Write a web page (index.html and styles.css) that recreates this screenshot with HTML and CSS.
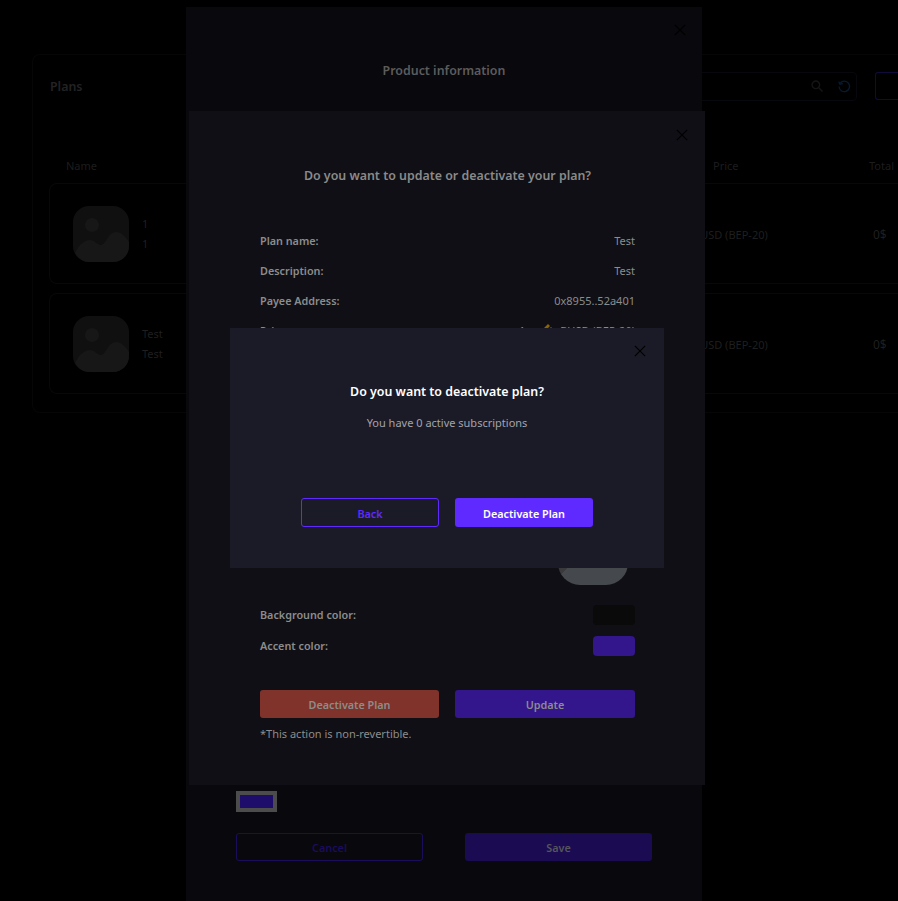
FILE: index.html
```html
<!DOCTYPE html>
<html lang="en">
<head>
    <meta charset="UTF-8">
    <meta name="viewport" content="width=device-width, initial-scale=1.0">
    <title>Plans</title>
    <link rel="stylesheet" href="styles.css">
</head>
<body>
    <div class="plans">
        <div class="plans__head">
            <div class="plans__title">Plans</div>
            <div class="search">
                <svg class="search__icon" viewBox="0 0 24 24" fill="none" stroke="#151515" stroke-width="2.400"><circle cx="10" cy="10" r="6.500"/><path d="M15 15l6.500 6.500"/></svg>
                <svg class="search__icon" viewBox="0 0 24 24" fill="none" stroke="#081a30" stroke-width="2.200"><path d="M5.500 7A9 9 0 1 1 3.500 13"/><path d="M3 4.500l2 4.500 5-1"/></svg>
            </div>
            <div class="plans__add"></div>
        </div>
        <div class="table__head">
            <span class="col-name">Name</span>
            <span class="col-price">Price</span>
            <span class="col-total">Total</span>
        </div>
        <div class="row">
            <svg class="thumb" viewBox="0 0 56 56"><rect width="56" height="56" rx="16" fill="#101010"/><circle cx="19" cy="19" r="7" fill="#171717"/><path d="M2 47C6 39 11 34 17 34C22 34 24 39 28 39C33 39 35 26 43 26C48 26 53 31 56 36V40C56 49 49 56 40 56H16C10 56 5 52 2 47z" fill="#171717"/></svg>
            <div class="row__text"><span>1</span><span>1</span></div>
            <span class="row__price">BUSD (BEP-20)</span>
            <span class="row__total">0$</span>
        </div>
        <div class="row">
            <svg class="thumb" viewBox="0 0 56 56"><rect width="56" height="56" rx="16" fill="#101010"/><circle cx="19" cy="19" r="7" fill="#171717"/><path d="M2 47C6 39 11 34 17 34C22 34 24 39 28 39C33 39 35 26 43 26C48 26 53 31 56 36V40C56 49 49 56 40 56H16C10 56 5 52 2 47z" fill="#171717"/></svg>
            <div class="row__text"><span>Test</span><span>Test</span></div>
            <span class="row__price">BUSD (BEP-20)</span>
            <span class="row__total">0$</span>
        </div>
    </div>

    <!-- first modal, furthest back -->
    <div class="modal modal--product">
        <svg class="close close--product" viewBox="0 0 14 14"><path d="M1 1l12 12M13 1L1 13"/></svg>
        <h2 class="product__title">Product information</h2>
        <div class="product__bottom">
            <div class="swatch-input"><div class="swatch-input__fill"></div></div>
            <div class="product__buttons">
                <button class="btn btn--cancel">Cancel</button>
                <button class="btn btn--save">Save</button>
            </div>
        </div>
    </div>

    <div class="modal modal--update">
        <svg class="close close--update" viewBox="0 0 14 14"><path d="M1 1l12 12M13 1L1 13"/></svg>
        <h2 class="update__title">Do you want to update or deactivate your plan?</h2>
        <div class="info">
            <div class="info__row"><b>Plan name:</b><span>Test</span></div>
            <div class="info__row"><b>Description:</b><span>Test</span></div>
            <div class="info__row"><b>Payee Address:</b><span>0x8955..52a401</span></div>
            <div class="info__row">
                <b>Price:</b>
                <span class="price"><span class="price__amount">1</span>
                    <svg class="coin" viewBox="0 0 14 14"><path d="M7 1l2 2-5 5-2-2zM10 4l2 2-5 5-2-2zM12.500 7.500l1 1-4 4-1-1z" fill="#8a6508"/></svg>
                    BUSD (BEP-20)</span>
            </div>
        </div>
        <div class="preview__wrap"><div class="preview"></div></div>
        <div class="color-row"><b>Background color:</b><div class="color color--bg"></div></div>
        <div class="color-row"><b>Accent color:</b><div class="color color--accent"></div></div>
        <div class="update__buttons">
            <button class="btn btn--red">Deactivate Plan</button>
            <button class="btn btn--update">Update</button>
        </div>
        <p class="update__note">*This action is non-revertible.</p>
    </div>

    <div class="modal modal--confirm">
        <svg class="close close--confirm" viewBox="0 0 14 14"><path d="M1 1l12 12M13 1L1 13"/></svg>
        <h2 class="confirm__title">Do you want to deactivate plan?</h2>
        <p class="confirm__text">You have 0 active subscriptions</p>
        <div class="confirm__buttons">
            <button class="btn btn--back">Back</button>
            <button class="btn btn--deactivate">Deactivate Plan</button>
        </div>
    </div>
</body>
</html>
```

FILE: styles.css
```css
* {
    box-sizing: border-box;
}
html, body {
    height: 100%;
}
body {
    margin: 0;
    overflow: hidden;
    background-color: #000;
    font-family: "Noto Sans", Arial, sans-serif;
    font-size: 11px;
}
h2, p {
    margin: 0;
}

/* plans table behind the modals */
.plans {
    width: 866px;
    height: 359px;
    margin: 54px 0 0 32px;
    padding: 16px 0 0 16px;
    border: 1px solid #060606;
    border-right: 0;
    border-radius: 8px 0 0 8px;
    overflow: hidden;
}
.plans__head {
    display: flex;
    align-items: center;
    height: 30px;
}
.plans__title {
    margin-left: 1px;
    font-size: 12.400px;
    font-weight: 600;
    color: #232323;
}
.search {
    display: flex;
    align-items: center;
    justify-content: flex-end;
    gap: 13px;
    width: 300px;
    height: 29px;
    margin-left: auto;
    margin-right: 18px;
    padding-right: 5px;
    border: 1px solid #07070e;
    border-radius: 4px;
}
.search__icon {
    width: 14px;
    height: 14px;
}
.plans__add {
    flex: none;
    width: 23px;
    height: 28px;
    border: 1px solid #120a3a;
    border-right: 0;
    border-radius: 3px 0 0 3px;
}
.table__head {
    display: flex;
    height: 82px;
    padding-top: 57px;
    padding-left: 17px;
    line-height: 16px;
    color: #1d1d1d;
}
.col-name {
    width: 647px;
}
.col-price {
    width: 156px;
}
.row {
    display: flex;
    align-items: center;
    height: 101px;
    margin-top: 9px;
    padding-left: 23px;
    border: 1px solid #080808;
    border-right: 0;
    border-radius: 8px 0 0 8px;
    color: #1f1f1f;
}
.table__head + .row {
    margin-top: 0;
}
.thumb {
    width: 56px;
    height: 56px;
    flex: none;
}
.row__text {
    display: flex;
    flex-direction: column;
    gap: 4px;
    width: 551px;
    margin-left: 13px;
    line-height: 16px;
}
.row__price {
    width: 180px;
    padding-top: 1px;
}
.row__total {
    padding-top: 1px;
    font-size: 12px;
}

/* modals */
.modal {
    position: fixed;
}
.close {
    position: absolute;
    width: 12px;
    height: 12px;
    fill: none;
    stroke: #000;
    stroke-width: 1.400;
}
.modal--product {
    left: 186px;
    top: 7px;
    width: 516px;
    height: 894px;
    background-color: #08080d;
}
.close--product {
    right: 16px;
    top: 17px;
}
.product__title {
    margin-top: 55px;
    text-align: center;
    font-size: 12.400px;
    font-weight: 600;
    line-height: 18px;
    color: #5c5c5c;
}
.product__bottom {
    margin: 711px 50px 0;
}
.swatch-input {
    width: 41px;
    height: 21px;
    padding: 4px;
    background-color: #4c4c4c;
}
.swatch-input__fill {
    height: 100%;
    background-color: #1f0d6b;
}
.product__buttons {
    display: flex;
    gap: 42px;
    margin-top: 21px;
}
.modal--update {
    left: 189px;
    top: 111px;
    width: 516px;
    height: 674px;
    padding: 0 70px 0 71px;
    background-color: #0f0f15;
}
.close--update {
    right: 17px;
    top: 18px;
}
.update__title {
    margin-top: 56px;
    text-align: center;
    font-size: 12.400px;
    font-weight: 600;
    line-height: 18px;
    color: #8a8a8a;
}
.info {
    margin-top: 40px;
}
.info__row {
    display: flex;
    justify-content: space-between;
    align-items: center;
    height: 30px;
    color: #8c8c8c;
}
.info__row b {
    font-size: 10.800px;
    font-weight: 600;
}
.price {
    display: flex;
    align-items: center;
    gap: 5px;
}
.price__amount {
    margin-right: 11px;
}
.coin {
    width: 14px;
    height: 14px;
}
.preview__wrap {
    display: flex;
    justify-content: flex-end;
    padding-right: 7px;
}
.preview {
    width: 70px;
    height: 240px;
    border-radius: 0 0 22px 22px;
    background: #45484c linear-gradient(135deg, #3a3a3c 0 16px, #45484c 16px) left bottom / 70px 30px no-repeat;
}
.color-row {
    display: flex;
    justify-content: space-between;
    align-items: center;
    height: 20px;
    margin-top: 11px;
    color: #8c8c8c;
}
.color-row b {
    padding-bottom: 2px;
    font-size: 10.800px;
    font-weight: 600;
}
.preview__wrap + .color-row {
    margin-top: 20px;
}
.color {
    width: 42px;
    height: 20px;
    border-radius: 4px;
}
.color--bg {
    background-color: #0a0a0a;
}
.color--accent {
    background-color: #33158c;
}
.update__buttons {
    display: flex;
    gap: 16px;
    margin-top: 34px;
}
.update__note {
    margin-top: 8px;
    line-height: 16px;
    color: #8c8c8c;
}
.modal--confirm {
    left: 230px;
    top: 328px;
    width: 434px;
    height: 240px;
    background-color: #1b1b27;
    text-align: center;
}
.close--confirm {
    right: 18px;
    top: 17px;
}
.confirm__title {
    margin-top: 55px;
    font-size: 12.400px;
    font-weight: 600;
    line-height: 18px;
    color: #fff;
}
.confirm__text {
    margin-top: 13px;
    line-height: 18px;
    color: #a3a3ab;
}
.confirm__buttons {
    display: flex;
    justify-content: center;
    gap: 16px;
    margin-top: 66px;
}

/* buttons */
.btn {
    height: 28px;
    padding: 1px 0 0;
    border: 1px solid transparent;
    border-radius: 3px;
    font-family: inherit;
    font-size: 10.800px;
    font-weight: 600;
}
.btn--cancel {
    width: 187px;
    background: none;
    border-color: #1b0d5c;
    color: #1b0d5c;
}
.btn--save {
    width: 187px;
    background-color: #1a0b52;
    color: #55555c;
}
.btn--red {
    width: 179px;
    background-color: #80332a;
    color: #8c8c8c;
}
.btn--update {
    width: 180px;
    background-color: #33158c;
    color: #8c8c8c;
}
.btn--back {
    width: 138px;
    height: 29px;
    background: none;
    border-color: #5f2aff;
    color: #5f2aff;
}
.btn--deactivate {
    width: 138px;
    height: 29px;
    background-color: #5f2aff;
    color: #fff;
}
```
